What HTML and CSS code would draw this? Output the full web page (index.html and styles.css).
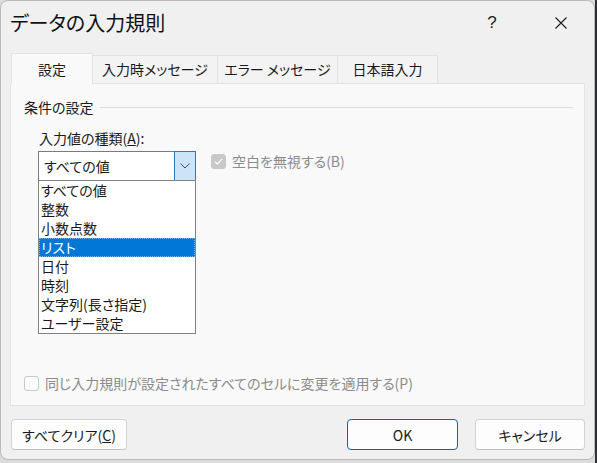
FILE: index.html
```html
<!DOCTYPE html>
<html lang="ja">
<head>
    <meta charset="UTF-8">
    <meta name="viewport" content="width=device-width, initial-scale=1.0">
    <title>データの入力規則</title>
    <link rel="stylesheet" href="styles.css">
</head>
<body>
    <div class="dialog">
        <div class="titlebar">
            <div class="title">データの入力規則</div>
            <div class="caption-btn help">?</div>
            <div class="caption-btn close">
                <svg width="12" height="12" viewBox="0 0 12 12">
                    <path d="M0.5 0.5 L11.5 11.5 M11.5 0.5 L0.5 11.5" stroke="#1b1b1b" stroke-width="1.1" fill="none"/>
                </svg>
            </div>
        </div>

        <div class="tabs">
            <div class="tab active tab-1">設定</div>
            <div class="tab tab-2">入力時メッセージ</div>
            <div class="tab tab-3">エラー メッセージ</div>
            <div class="tab tab-4">日本語入力</div>
        </div>

        <div class="pane">
            <div class="group-head">
                <span>条件の設定</span>
                <span class="rule"></span>
            </div>

            <div class="field-label">入力値の種類(<u>A</u>):</div>
            <div class="field-row">
                <div class="combo">
                    <div class="combo-text">すべての値</div>
                    <div class="combo-btn">
                        <svg width="10" height="6" viewBox="0 0 10 6">
                            <path d="M0.5 0.5 L5 5 L9.5 0.5" stroke="#3a4a5a" stroke-width="1" fill="none"/>
                        </svg>
                    </div>
                    <ul class="listbox">
                        <li>すべての値</li>
                        <li>整数</li>
                        <li>小数点数</li>
                        <li class="selected">リスト</li>
                        <li>日付</li>
                        <li>時刻</li>
                        <li>文字列(長さ指定)</li>
                        <li>ユーザー設定</li>
                    </ul>
                </div>
                <label class="check disabled">
                    <span class="box checked">
                        <svg width="9" height="7" viewBox="0 0 9 7">
                            <path d="M0.8 3.6 L3.3 6 L8.2 0.9" stroke="#fff" stroke-width="1.2" fill="none"/>
                        </svg>
                    </span>
                    空白を無視する(B)
                </label>
            </div>

            <label class="check disabled apply-all">
                <span class="box"></span>
                同じ入力規則が設定されたすべてのセルに変更を適用する(P)
            </label>
        </div>

        <div class="buttons">
            <button class="btn btn-clear">すべてクリア(<u>C</u>)</button>
            <div class="spacer"></div>
            <button class="btn btn-ok">OK</button>
            <button class="btn btn-cancel">キャンセル</button>
        </div>
    </div>
</body>
</html>
```

FILE: styles.css
```css
html, body {
    margin: 0;
    padding: 0;
}

body {
    width: 597px;
    height: 463px;
    overflow: hidden;
    background: linear-gradient(90deg, #dcdcdc 0, #dcdcdc 595px, #2b2f36 595px);
    font-family: "Noto Sans CJK JP", "Noto Sans", sans-serif;
    font-feature-settings: "palt";
    font-size: 14px;
    color: #1a1a1a;
}

.dialog {
    box-sizing: border-box;
    width: 595px;
    height: 460px;
    background: #f0f0f0;
    border: 1px solid #b9b9b9;
    border-radius: 8px;
    display: flex;
    flex-direction: column;
}

/* title bar */

.titlebar {
    display: flex;
    align-items: flex-start;
    height: 52px;
}

.title {
    flex: 1;
    padding: 9px 0 0 9px;
    font-size: 20px;
    line-height: 26px;
    color: #111;
}

.caption-btn {
    width: 46px;
    height: 40px;
    display: flex;
    justify-content: center;
    align-items: center;
    margin-top: 2px;
}

.help {
    margin-right: 23px;
    font-family: "Liberation Sans", sans-serif;
    font-size: 17px;
    color: #222;
}

.close {
    margin-right: 10px;
}

/* tabs */

.tabs {
    display: flex;
    align-items: flex-end;
    height: 30px;
    margin-left: 10px;
    position: relative;
    z-index: 1;
}

.tab {
    box-sizing: border-box;
    height: 28px;
    line-height: 26px;
    text-align: center;
    background: #f3f3f3;
    border: 1px solid #e3e3e3;
    border-bottom: none;
    border-left: none;
    color: #1a1a1a;
}

.tab.active {
    height: 31px;
    margin-bottom: -1px;
    line-height: 30px;
    background: #f9f9f9;
    border-left: 1px solid #e3e3e3;
}

.tab-1 { width: 82px; }
.tab-2 { width: 125px; }
.tab-3 { width: 120px; }
.tab-4 { width: 100px; }

/* settings pane */

.pane {
    box-sizing: border-box;
    height: 323px;
    margin: 0 9px 0 9px;
    padding: 16px 11px 0 13px;
    background: #f9f9f9;
    border: 1px solid #e3e3e3;
    display: flex;
    flex-direction: column;
}

.group-head {
    display: flex;
    align-items: center;
    line-height: 15px;
    height: 15px;
}

.group-head .rule {
    flex: 1;
    height: 1px;
    background: #dedede;
    margin-left: 6px;
}

.field-label {
    margin: 13px 0 0 15px;
    line-height: 20px;
}

.field-row {
    display: flex;
    align-items: flex-start;
    margin: 3px 0 0 14px;
}

.combo {
    position: relative;
    box-sizing: border-box;
    width: 158px;
    height: 30px;
    display: flex;
    background: #fff;
    border: 1px solid #7a7a7a;
}

.combo-text {
    flex: 1;
    padding-left: 5px;
    line-height: 28px;
}

.combo-btn {
    box-sizing: border-box;
    width: 22px;
    margin: -1px -1px -1px 0;
    background: #cce4f7;
    border: 1px solid #2f78c4;
    display: flex;
    justify-content: center;
    align-items: center;
}

/* open drop-down list, drawn over the pane */
.listbox {
    position: absolute;
    top: 28px;
    left: -1px;
    box-sizing: border-box;
    width: 158px;
    height: 154px;
    margin: 0;
    padding: 0;
    list-style: none;
    background: #fff;
    border: 1px solid #828282;
    z-index: 2;
}

.listbox li {
    height: 19px;
    line-height: 19px;
    padding-left: 2px;
    white-space: nowrap;
}

.listbox li.selected {
    background: #0078d7;
    color: #fff;
    outline: 1px dotted #7fb4e6;
    outline-offset: -1px;
}

/* check boxes */

.check {
    display: flex;
    align-items: center;
    line-height: 20px;
}

.check.disabled {
    color: #8b8b8b;
}

.box {
    box-sizing: border-box;
    width: 15px;
    height: 15px;
    margin-right: 6px;
    border: 1px solid #c8c8c8;
    border-radius: 3px;
    background: #fbfbfb;
    display: flex;
    justify-content: center;
    align-items: center;
}

.box.checked {
    background: #c8c8c8;
}

.field-row .check {
    margin: 0 0 0 15px;
}

.apply-all {
    margin-top: auto;
    margin-bottom: 12px;
}

/* bottom buttons */

.buttons {
    display: flex;
    align-items: center;
    margin: 13px 9px 0 10px;
}

.spacer {
    flex: 1;
}

.btn {
    box-sizing: border-box;
    height: 31px;
    font-family: "Noto Sans CJK JP", "Noto Sans", sans-serif;
    font-feature-settings: "palt";
    font-size: 14px;
    color: #1a1a1a;
    background: #fdfdfd;
    border: 1px solid #d3d3d3;
    border-bottom-color: #bdbdbd;
    border-radius: 4px;
    padding: 0;
}

.btn-clear {
    width: 116px;
}

.btn-ok {
    width: 111px;
    border: 1px solid #0f63b3;
    margin-right: 17px;
}

.btn-cancel {
    width: 110px;
}
```
